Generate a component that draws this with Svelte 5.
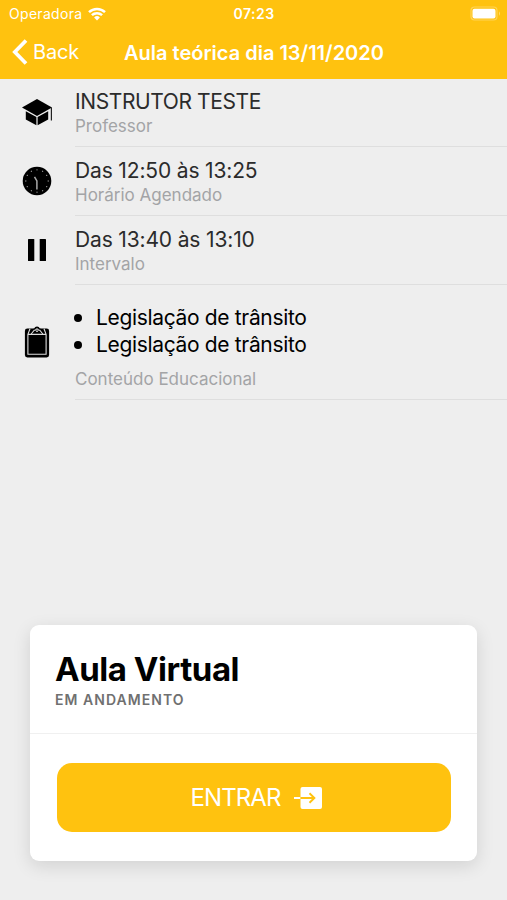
<script lang="ts">
	type Row = { icon: 'school' | 'clock' | 'pause' | 'clipboard'; title?: string; topics?: string[]; label: string };

	const rows: Row[] = [
		{ icon: 'school', title: 'INSTRUTOR TESTE', label: 'Professor' },
		{ icon: 'clock', title: 'Das 12:50 às 13:25', label: 'Horário Agendado' },
		{ icon: 'pause', title: 'Das 13:40 às 13:10', label: 'Intervalo' },
		{
			icon: 'clipboard',
			topics: ['Legislação de trânsito', 'Legislação de trânsito'],
			label: 'Conteúdo Educacional'
		}
	];

	// hour marks on the clock face
	const ticks = Array.from({ length: 12 }, (_, i) => i * 30);
</script>

<div class="screen">
	<header>
		<div class="status">
			<div class="carrier">
				<span>Operadora</span>
				<svg class="wifi" viewBox="0 0 18 14" width="18" height="14">
					<path d="M1 5.2a11.5 11.5 0 0 1 16 0M3.9 8.2a7.4 7.4 0 0 1 10.2 0" fill="none" stroke="#fff" stroke-width="2.5" />
					<path d="M9 13.4 6.1 10.5a4.1 4.1 0 0 1 5.8 0z" fill="#fff" />
				</svg>
			</div>
			<span class="time">07:23</span>
			<svg class="battery" viewBox="0 0 31 15" width="31" height="15">
				<rect x="1" y="1" width="26" height="13" rx="3.5" fill="none" stroke="#fff" stroke-opacity="0.3" stroke-width="1.2" />
				<rect x="2.5" y="2.8" width="23" height="9.6" rx="2" fill="#fff" />
				<path d="M29 5.2q2 2.3 0 4.6z" fill="#fff" fill-opacity="0.4" />
			</svg>
		</div>
		<div class="nav">
			<button class="back">
				<svg viewBox="0 0 16 26" width="16" height="26">
					<path d="M14 1.5 2.8 13 14 24.5" fill="none" stroke="#fff" stroke-width="3.7" />
				</svg>
				<span>Back</span>
			</button>
			<h1>Aula teórica dia 13/11/2020</h1>
		</div>
	</header>

	<main>
		{#each rows as row}
			<section class="row" class:tall={row.topics}>
				<div class="icon">
					{#if row.icon === 'school'}
						<svg viewBox="0 0 32 28" width="32" height="28">
							<path d="M16 1 1 9.6l15 8.5 15-8.5z" />
							<path d="M4.8 13.2v8.3l10.6 5.8v-8.2zM27.2 13.2v8.3l-10.6 5.8v-8.2z" />
							<path d="M30.4 9.6V22.5" stroke="#222" stroke-width="1.2" />
						</svg>
					{:else if row.icon === 'clock'}
						<svg viewBox="0 0 30 30" width="30" height="30">
							<circle cx="15" cy="15" r="14.3" />
							{#each ticks as angle}
								<circle cx="15" cy="3.8" r="0.65" fill="#999" transform="rotate({angle} 15 15)" />
							{/each}
							<path d="M12.5 10.8 14.9 15V23.6" fill="none" stroke="#aaa" stroke-width="1.5" />
						</svg>
					{:else if row.icon === 'pause'}
						<svg viewBox="0 0 20 22" width="20" height="22">
							<rect x="1" y="0" width="6.3" height="22" rx="0.6" />
							<rect x="12.7" y="0" width="6.3" height="22" rx="0.6" />
						</svg>
					{:else}
						<svg viewBox="0 0 26 32" width="26" height="32">
							<rect x="0.9" y="2.5" width="24.2" height="29" rx="2.4" />
							<path d="M7.5 3.5 10.2 2.6a2.9 2.9 0 0 1 5.6 0l2.7.9z" />
							<path d="M6 2.8 3.9 8.4V28.2h18.2V8.4L20 2.8M3.9 8.4h18.2" fill="none" stroke="#ddd" stroke-width="1.1" />
							<path d="m7.2 8 3-3.8h1.1q1.7-2.7 3.4 0h1.1l3 3.8" fill="none" stroke="#ddd" stroke-width="1.1" />
							<circle cx="13" cy="5.2" r="0.9" fill="#ddd" />
						</svg>
					{/if}
				</div>
				<div class="content">
					{#if row.topics}
						<ul>
							{#each row.topics as topic}
								<li><span>{topic}</span></li>
							{/each}
						</ul>
					{:else}
						<h2 class={row.icon}>{row.title}</h2>
					{/if}
					<p>{row.label}</p>
				</div>
			</section>
		{/each}
	</main>

	<article class="card">
		<div class="card-head">
			<h3>Aula Virtual</h3>
			<p>EM ANDAMENTO</p>
		</div>
		<div class="card-body">
			<button class="enter">
				<span>ENTRAR</span>
				<svg viewBox="0 0 28 22" width="28" height="22">
					<rect x="6.5" y="0" width="21.5" height="22" rx="2" fill="#fff" />
					<path d="M0 11h6.5" stroke="#fff" stroke-width="2" />
					<path d="M6.5 11H20M15.5 6.2l4.9 4.8-4.9 4.8" fill="none" stroke="#ffc20f" stroke-width="1.9" />
				</svg>
			</button>
		</div>
	</article>
</div>

<style>
	:global(body) {
		margin: 0;
	}
	.screen {
		display: flex;
		flex-direction: column;
		box-sizing: border-box;
		width: 507px;
		height: 900px;
		padding-bottom: 39px;
		overflow: hidden;
		background: #eee;
		font-family: Inter, sans-serif;
		color: #000;
	}
	h1,
	h2,
	h3,
	p,
	ul {
		margin: 0;
		padding: 0;
		white-space: nowrap;
	}
	button {
		border: 0;
		padding: 0;
		background: none;
		color: #fff;
		font-family: inherit;
	}
	svg {
		display: block;
		flex: none;
	}
	header {
		height: 79px;
		flex: none;
		background: #ffc20f;
		color: #fff;
	}
	.status {
		display: grid;
		grid-template-columns: 1fr auto 1fr;
		align-items: center;
		height: 27px;
		padding: 0 6px 0 9px;
		font-size: 14px;
		line-height: 27px;
	}
	.carrier {
		display: flex;
		align-items: center;
		gap: 6px;
		letter-spacing: 0.3px;
	}
	.time {
		margin-right: 2px;
		font-weight: 600;
		letter-spacing: 0.5px;
	}
	.battery {
		justify-self: end;
	}
	.nav {
		display: grid;
		grid-template-columns: 124px 1fr;
		align-items: center;
		height: 50px;
	}
	.back {
		display: flex;
		align-items: center;
		gap: 5px;
		padding-left: 12px;
		font-size: 20px;
		line-height: 24px;
		letter-spacing: -0.2px;
	}
	h1 {
		padding-top: 1px;
		font-size: 20px;
		font-weight: 600;
		line-height: 24px;
	}
	main {
		flex: 1;
	}
	.row {
		display: flex;
		box-sizing: border-box;
		height: 69px;
	}
	.row:first-child {
		height: 68px;
	}
	.row.tall {
		height: 115px;
	}
	.icon {
		display: grid;
		place-items: center;
		box-sizing: border-box;
		width: 75px;
		padding: 0 1px 2px 0;
	}
	.content {
		flex: 1;
		box-sizing: border-box;
		padding-top: 11px;
		border-bottom: 1px solid #dedede;
	}
	.row:first-child .content {
		padding-top: 10px;
	}
	h2 {
		font-size: 21px;
		font-weight: 400;
		line-height: 26px;
		letter-spacing: -0.15px;
		color: #2b2b2b;
	}
	h2.school {
		letter-spacing: -0.4px;
	}
	.content p {
		font-size: 17px;
		line-height: 23px;
		color: #a3a4a6;
	}
	ul {
		padding: 19px 0 10px;
		list-style: none;
	}
	.tall .content {
		padding-top: 0;
	}
	li {
		display: flex;
		align-items: center;
		gap: 14px;
		font-size: 21px;
		line-height: 27px;
		letter-spacing: -0.34px;
	}
	li::before {
		content: '';
		width: 8px;
		height: 8px;
		margin-left: -1px;
		border-radius: 50%;
		background: #000;
	}
	.card {
		width: 447px;
		height: 236px;
		margin: 0 30px;
		border-radius: 9px;
		background: #fff;
		box-shadow: 0 5px 18px rgba(0, 0, 0, 0.12);
	}
	.card-head {
		box-sizing: border-box;
		height: 109px;
		padding: 24px 25px 0;
		border-bottom: 1px solid #f0f0f0;
	}
	h3 {
		font-size: 33px;
		font-weight: 700;
		line-height: 41px;
		letter-spacing: -0.45px;
	}
	.card-head p {
		font-size: 14px;
		font-weight: 600;
		line-height: 20px;
		letter-spacing: 1.05px;
		color: #707070;
	}
	.card-body {
		padding: 29px 27px;
	}
	.enter {
		display: flex;
		align-items: center;
		justify-content: center;
		gap: 13px;
		width: 394px;
		height: 69px;
		padding-left: 4px;
		border-radius: 15px;
		background: #ffc20f;
		font-size: 24px;
		letter-spacing: -0.9px;
	}
</style>
